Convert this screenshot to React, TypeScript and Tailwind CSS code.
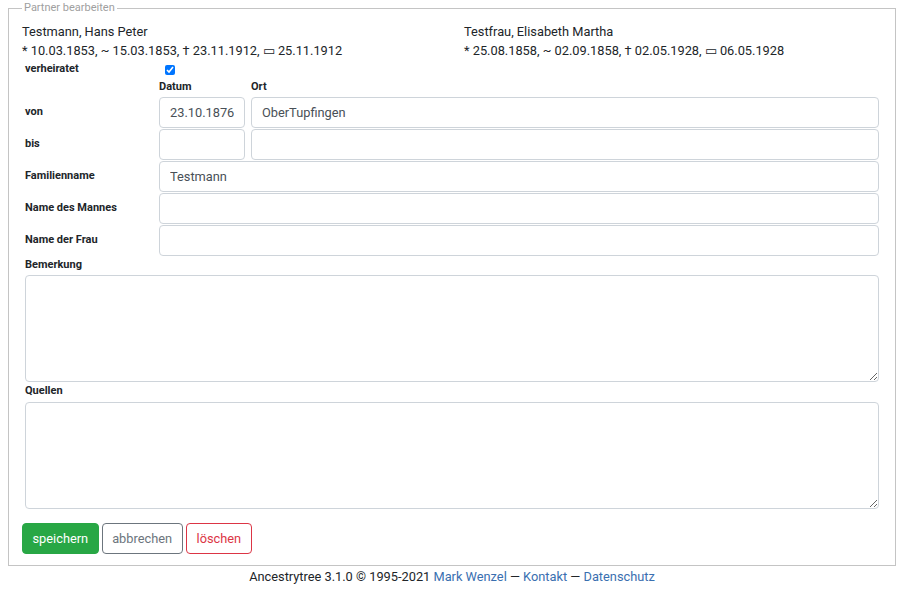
import React from "react";

const inputCls =
  "h-[31px] border border-[#ced4da] rounded-[4px] px-[10px] text-[12.8px] text-[#495057] bg-white outline-none";

function Row({ label, children }: { label: string; children: React.ReactNode }) {
  return (
    <div className="flex">
      <div className="w-[134px] shrink-0 pt-[8px] text-[11px] leading-[13px] font-bold text-[#212529]">{label}</div>
      <div className="flex-1 flex gap-[6px]">{children}</div>
    </div>
  );
}

export default function App() {
  return (
    <div className="bg-white min-h-[591px] text-[#212529]" style={{ fontFamily: "Roboto, 'Liberation Sans', sans-serif" }}>
      <fieldset className="mx-2 mt-[2px] border border-[#c4c4c4] px-[13px] pt-[8px] pb-[11px]">
        <legend className="px-[2px] text-[11px] leading-[12px] text-[#a0a0a0]">Partner bearbeiten</legend>
        <div className="grid grid-cols-[442px_1fr] text-[12.8px] leading-[19px]">
          <div>
            <div>Testmann, Hans Peter</div>
            <div>* 10.03.1853, ~ 15.03.1853, † 23.11.1912, ▭ 25.11.1912</div>
          </div>
          <div>
            <div>Testfrau, Elisabeth Martha</div>
            <div>* 25.08.1858, ~ 02.09.1858, † 02.05.1928, ▭ 06.05.1928</div>
          </div>
        </div>
        <div className="px-[3px]">
          <div className="flex h-[17px] items-start">
            <div className="w-[134px] shrink-0 mt-[2px] text-[11px] leading-[13px] font-bold">verheiratet</div>
            <input type="checkbox" defaultChecked className="ml-[6px] mt-[5px] w-[10px] h-[10px] accent-[#0075ff]" />
          </div>
          <div className="flex h-[20px] items-center pt-[1px] text-[11px] font-bold">
            <div className="w-[134px] shrink-0"></div>
            <div className="w-[86px]">Datum</div>
            <div className="ml-[6px]">Ort</div>
          </div>
          <div className="flex flex-col gap-[1px]">
            <Row label="von">
              <input className={inputCls + " w-[86px]"} defaultValue="23.10.1876" />
              <input className={inputCls + " flex-1 min-w-0"} defaultValue="OberTupfingen" />
            </Row>
            <Row label="bis">
              <input className={inputCls + " w-[86px]"} />
              <input className={inputCls + " flex-1 min-w-0"} />
            </Row>
            <Row label="Familienname">
              <input className={inputCls + " flex-1 min-w-0"} defaultValue="Testmann" />
            </Row>
            <Row label="Name des Mannes">
              <input className={inputCls + " flex-1 min-w-0"} />
            </Row>
            <Row label="Name der Frau">
              <input className={inputCls + " flex-1 min-w-0"} />
            </Row>
          </div>
          <div className="pt-[2px] pb-[4px] h-[19px] text-[11px] leading-[13px] font-bold">Bemerkung</div>
          <textarea className="block w-full h-[107px] border border-[#ced4da] rounded-[4px] text-[13px] outline-none"></textarea>
          <div className="pt-[2px] pb-[4px] h-[20px] text-[11px] leading-[13px] font-bold">Quellen</div>
          <textarea className="block w-full h-[107px] border border-[#ced4da] rounded-[4px] text-[13px] outline-none"></textarea>
        </div>
        <div className="flex gap-[3px] mt-[14px]">
          <button className="h-[31px] px-[9.5px] rounded-[4px] bg-[#28a745] border border-[#28a745] text-white text-[12.8px]">speichern</button>
          <button className="h-[31px] px-[9.5px] rounded-[4px] bg-white border border-[#6c757d] text-[#6c757d] text-[12.8px]">abbrechen</button>
          <button className="h-[31px] px-[10px] rounded-[4px] bg-white border border-[#dc3545] text-[#dc3545] text-[12.8px]">löschen</button>
        </div>
      </fieldset>
      <div className="text-center text-[12.8px] leading-[20px] pt-[1px]">
        Ancestrytree 3.1.0 © 1995-2021 <a className="text-[#3a6fb0]">Mark Wenzel</a> — <a className="text-[#3a6fb0]">Kontakt</a> — <a className="text-[#3a6fb0]">Datenschutz</a>
      </div>
    </div>
  );
}
